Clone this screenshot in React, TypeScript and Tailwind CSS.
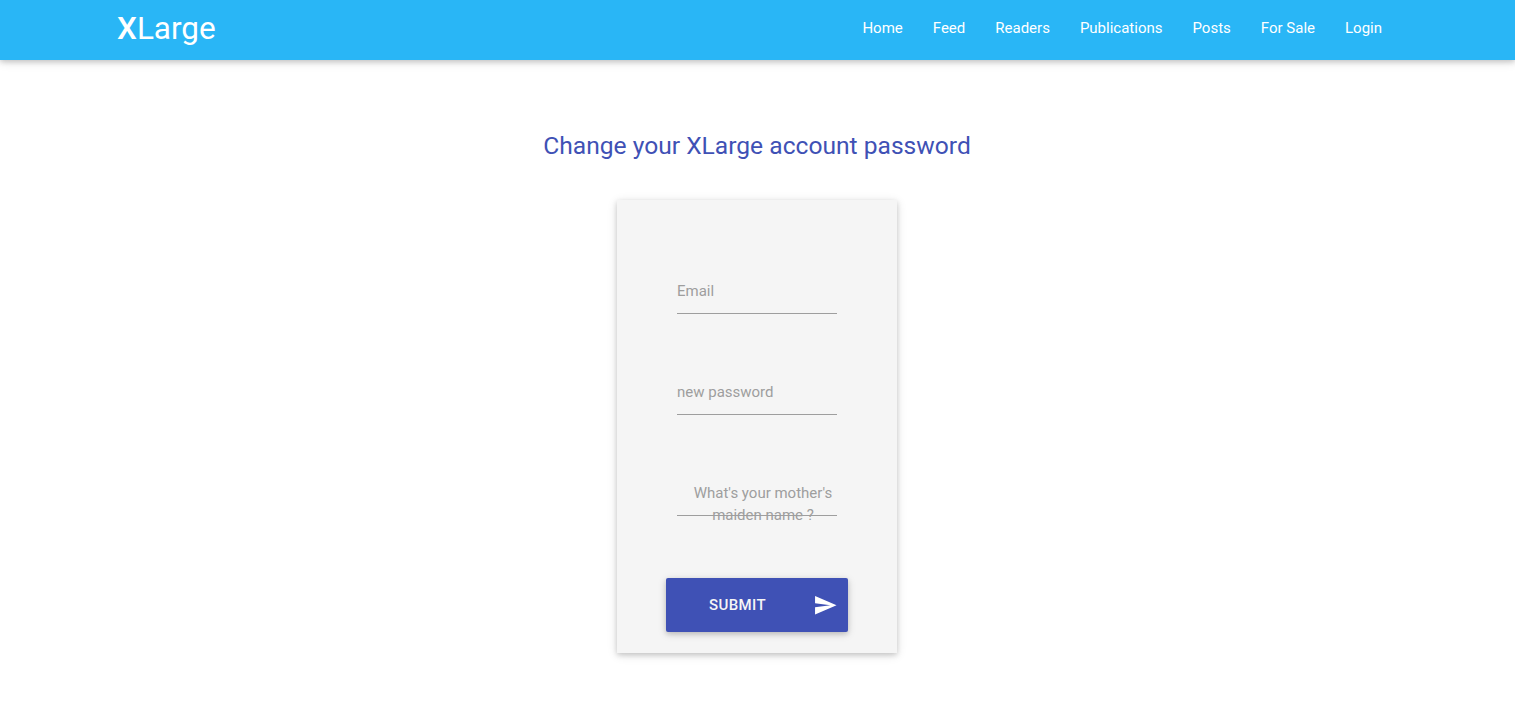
const links = ["Home", "Feed", "Readers", "Publications", "Posts", "For Sale", "Login"];

function Field({ label, wrapped = false }: { label: string; wrapped?: boolean }) {
  return (
    <div className="relative h-[101px] w-[160px]">
      <input aria-label={label} className="block h-[45px] w-full border-b border-[#9e9e9e] bg-transparent outline-none" />
      <label
        className={
          wrapped
            ? "pointer-events-none absolute left-[11px] top-[11px] w-[150px] text-center text-[15px] leading-[22px] text-[#9e9e9e]"
            : "pointer-events-none absolute left-0 top-[11px] text-[15px] leading-[22px] text-[#9e9e9e]"
        }
      >
        {label}
      </label>
    </div>
  );
}

export default function App() {
  return (
    <div className="h-[716px] overflow-hidden bg-white font-['Roboto',sans-serif] text-[15px]">
      <nav className="flex h-[60px] justify-between bg-[#29b6f6] pl-[117px] pr-[118px] text-white shadow-[0_2px_5px_0_rgba(0,0,0,0.16),0_2px_10px_0_rgba(0,0,0,0.12)]">
        <a className="pt-px text-[31.5px] leading-[56px]"><b className="font-medium">X</b>Large</a>
        <ul className="flex">
          {links.map((link) => (
            <li key={link} className="px-[15px] leading-[56px]">{link}</li>
          ))}
        </ul>
      </nav>
      <main className="flex flex-col items-center pr-px">
        <h1 className="mt-[68px] text-[24.6px] leading-[35px] text-[#3f51b5]">Change your XLarge account password</h1>
        <form className="mt-[37px] flex h-[453px] w-[280px] flex-col items-center bg-[#f5f5f5] pt-[69px] shadow-[0_2px_5px_0_rgba(0,0,0,0.16),0_2px_10px_0_rgba(0,0,0,0.12)]">
          <Field label="Email" />
          <Field label="new password" />
          <Field label="What's your mother's maiden name ?" wrapped />
          <button
            type="button"
            className="mt-[6px] flex h-[54px] w-[182px] shrink-0 items-center justify-between rounded-[2px] bg-[#3f51b5] pl-[43px] pr-[10px] font-medium tracking-[0.4px] text-white shadow-[0_2px_5px_0_rgba(0,0,0,0.16),0_2px_10px_0_rgba(0,0,0,0.12)]"
          >
            <span className="text-[#f5f5f5]">SUBMIT</span>
            <svg className="size-[24.6px]" viewBox="0 0 24 24" fill="currentColor">
              <path d="M2.01 21L23 12 2.01 3 2 10l15 2-15 2z" />
            </svg>
          </button>
        </form>
      </main>
    </div>
  );
}
